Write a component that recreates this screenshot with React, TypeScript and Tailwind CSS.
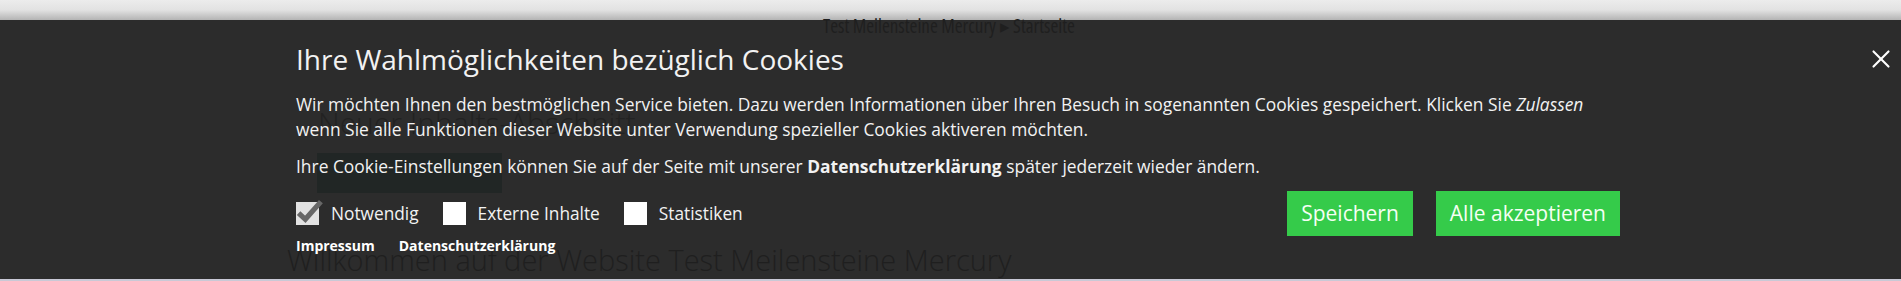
import { X } from "lucide-react";

const font = { fontFamily: '"Open Sans", "Noto Sans", sans-serif' };

function CheckBox({ checked }: { checked?: boolean }) {
  return (
    <span className="relative block h-[23px] w-[23px] shrink-0 bg-white data-[on=true]:bg-[#e2e2e2]" data-on={checked}>
      {checked ? (
        <svg viewBox="0 0 26 26" className="absolute -top-[4px] left-0 h-[27px] w-[27px]">
          <path d="M2.5 14.5 L9 20.5 L24 3.5" fill="none" stroke="#676767" strokeWidth="5" strokeLinejoin="miter" />
        </svg>
      ) : null}
    </span>
  );
}

function Option({ label, checked }: { label: string; checked?: boolean }) {
  return (
    <label className="flex items-center gap-[12px] text-[17.3px] leading-[24px] text-[#f2f2f2]">
      <CheckBox checked={checked} />
      <span>{label}</span>
    </label>
  );
}

export default function App() {
  return (
    <div className="relative flex h-[281px] w-[1901px] flex-col overflow-hidden bg-[#2c2c2c]" style={font}>
      <div className="h-[20px] shrink-0 bg-gradient-to-b from-[#ececec] via-[#e2e2e2] to-[#b4b4b4]" />

      <div className="relative flex-1">
        {/* page behind the overlay */}
        <div className="pointer-events-none absolute inset-0 select-none text-[#1f1f1f]">
          <div className="absolute -top-[8px] left-[823px] text-[19px] font-stretch-[80%]">
            Test Meilensteine Mercury ▸ Startseite
          </div>
          <div className="absolute left-[318px] top-[80px] text-[30px] font-light text-[#222]">Neuer Inhalts-Abschnitt</div>
          <div className="absolute left-[317px] top-[133px] h-[40px] w-[185px] bg-[#212625]" />
          <div className="absolute left-[287px] top-[222px] text-[29px] font-light leading-[36px]">
            Willkommen auf der Website Test Meilensteine Mercury
          </div>
        </div>

        <button className="absolute right-[5px] top-[24px] text-white" aria-label="Schließen">
          <X className="h-[30px] w-[30px]" strokeWidth={1.7} />
        </button>

        <div className="relative pl-[296px] pr-[281px] pt-[21px] text-[#f2f2f2]">
          <h2 className="text-[28px] leading-[36px] font-normal">Ihre Wahlmöglichkeiten bezüglich Cookies</h2>
          <p className="mt-[15px] text-[17.4px] leading-[25px]">
            Wir möchten Ihnen den bestmöglichen Service bieten. Dazu werden Informationen über Ihren Besuch in sogenannten
            Cookies gespeichert. Klicken Sie <em>Zulassen</em> wenn Sie alle Funktionen dieser Website unter Verwendung
            spezieller Cookies aktiveren möchten.
          </p>
          <p className="mt-[12px] text-[17.4px] leading-[25px]">
            Ihre Cookie-Einstellungen können Sie auf der Seite mit unserer <strong>Datenschutzerklärung</strong> später
            jederzeit wieder ändern.
          </p>

          <div className="mt-[12px] flex h-[45px] items-center justify-between">
            <div className="flex items-center gap-[24px]">
              <Option label="Notwendig" checked />
              <Option label="Externe Inhalte" />
              <Option label="Statistiken" />
            </div>
            <div className="flex gap-[23px]">
              <button className="h-[45px] bg-[#35cb4a] px-[14px] text-[21px] text-[#f4fff4]">Speichern</button>
              <button className="h-[45px] bg-[#35cb4a] px-[14px] text-[21px] text-[#f4fff4]">Alle akzeptieren</button>
            </div>
          </div>

          <div className="flex gap-[24px] text-[14px] font-bold leading-[20px] text-white">
            <a>Impressum</a>
            <a>Datenschutzerklärung</a>
          </div>
        </div>
      </div>

      <div className="h-[2px] shrink-0 bg-[#c9c9d6]" />
    </div>
  );
}
